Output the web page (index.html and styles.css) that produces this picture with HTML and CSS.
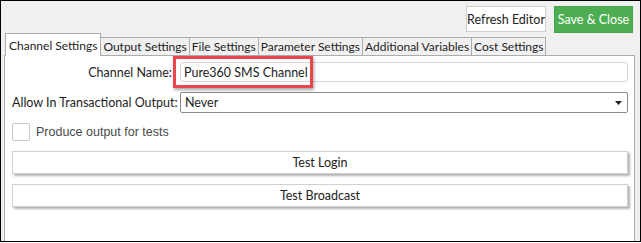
FILE: index.html
```html
<!DOCTYPE html>
<html lang="en">
  <head>
    <meta charset="UTF-8" />
    <meta name="viewport" content="width=device-width, initial-scale=1.0" />
    <title>Channel Editor</title>
    <link rel="stylesheet" href="styles.css">
  </head>
  <body>
    <div class="frame">
      <div class="toolbar">
        <button class="btn-refresh">Refresh Editor</button>
        <button class="btn-save">Save &amp; Close</button>
      </div>
      <div class="tabs">
        <div class="tab active">Channel Settings</div>
        <div class="tab">Output Settings</div>
        <div class="tab">File Settings</div>
        <div class="tab">Parameter Settings</div>
        <div class="tab">Additional Variables</div>
        <div class="tab">Cost Settings</div>
      </div>
      <div class="panel">
        <div class="form-grid">
          <label for="channel_name">Channel Name:</label>
          <input id="channel_name" type="text" value="Pure360 SMS Channel" />
          <label for="transactional">Allow In Transactional Output:</label>
          <div class="select">
            <span>Never</span>
            <svg width="7" height="4" viewBox="0 0 7 4"><path d="M0 0h7L3.5 4z" fill="#222"/></svg>
          </div>
        </div>
        <div class="check-row">
          <span class="checkbox"></span>
          <span class="check-label">Produce output for tests</span>
        </div>
        <button class="wide-btn">Test Login</button>
        <button class="wide-btn">Test Broadcast</button>
        <!-- screenshot annotation -->
        <div class="highlight"></div>
      </div>
    </div>
  </body>
</html>
```

FILE: styles.css
```css
body {
  margin: 0;
  padding: 0;
  font-family: "Lato", "Noto Sans", sans-serif;
  color: #1e1e1e;
}

.frame {
  box-sizing: border-box;
  width: 641px;
  height: 242px;
  border: 1px solid #000;
  background-color: #f0f0f0;
  display: flex;
  flex-direction: column;
}

.toolbar {
  display: flex;
  justify-content: flex-end;
  align-items: center;
  gap: 8px;
  padding: 4px 7px 0 0;
  height: 28px;
}

.toolbar button {
  font-family: "Lato", sans-serif;
  font-size: 12.5px;
  height: 26px;
  padding: 0;
  white-space: nowrap;
  cursor: pointer;
}

.btn-refresh {
  background-color: #fff;
  border: 1px solid #cfcfcf;
  color: #222;
  width: 80px;
}

.btn-save {
  background-color: #4cae50;
  border: 1px solid #45a349;
  color: #fff;
  width: 79px;
  height: 27px !important;
}

.tabs {
  display: flex;
  align-items: flex-end;
  padding-left: 4px;
  height: 22px;
}

.tab {
  font-size: 12px;
  height: 17px;
  line-height: 18px;
  padding: 0 2px;
  background-color: #f0f0f0;
  border: 1px solid #acacac;
  border-bottom: none;
  margin-right: -1px;
  white-space: nowrap;
}

.tab.active {
  background-color: #fff;
  height: 22px;
  line-height: 24px;
  padding: 0 3px;
  position: relative;
  z-index: 1;
  margin-bottom: -1px;
}

.panel {
  position: relative;
  flex: 1;
  margin: 0 5px 0 3px;
  background-color: #fff;
  border: 1px solid #acacac;
  border-bottom: none;
  padding: 6px 6px 0 7px;
}

.form-grid {
  display: grid;
  grid-template-columns: 160px 1fr;
  column-gap: 8px;
  row-gap: 10px;
  align-items: center;
}

.form-grid label {
  font-size: 12.5px;
  text-align: right;
  white-space: nowrap;
}

.form-grid label[for="transactional"] {
  text-align: left;
}

input[type="text"] {
  box-sizing: border-box;
  height: 20px;
  border: 1px solid #d6d6d6;
  border-radius: 3px;
  padding: 0 3px;
  font-family: "Lato", sans-serif;
  font-size: 12.5px;
  color: #222;
}

.select {
  box-sizing: border-box;
  height: 21px;
  border: 1px solid #8a8a8a;
  border-radius: 2px;
  display: flex;
  align-items: center;
  justify-content: space-between;
  padding: 0 5px 0 4px;
  font-size: 12.5px;
}

.check-row {
  display: flex;
  align-items: center;
  gap: 6px;
  margin-top: 10px;
  height: 18px;
}

.checkbox {
  box-sizing: border-box;
  width: 18px;
  height: 18px;
  border: 1px solid #c8c8c8;
  border-radius: 2px;
  background-color: #fff;
}

.check-label {
  font-family: "Liberation Sans", Arial, sans-serif;
  font-size: 12.5px;
  color: #4a4a4a;
}

.wide-btn {
  display: block;
  box-sizing: border-box;
  width: 100%;
  height: 23px;
  margin-top: 10px;
  background-color: #fff;
  border: 1px solid #d0d0d0;
  box-shadow: 2px 2px 2px rgba(0, 0, 0, 0.3);
  font-family: "Lato", sans-serif;
  font-size: 12.5px;
  color: #222;
  cursor: pointer;
}

.highlight {
  position: absolute;
  left: 168px;
  top: 0;
  width: 134px;
  height: 26px;
  border: 3px solid #e8464c;
  box-shadow: 1px 2px 3px rgba(0, 0, 0, 0.35);
  pointer-events: none;
}
```
